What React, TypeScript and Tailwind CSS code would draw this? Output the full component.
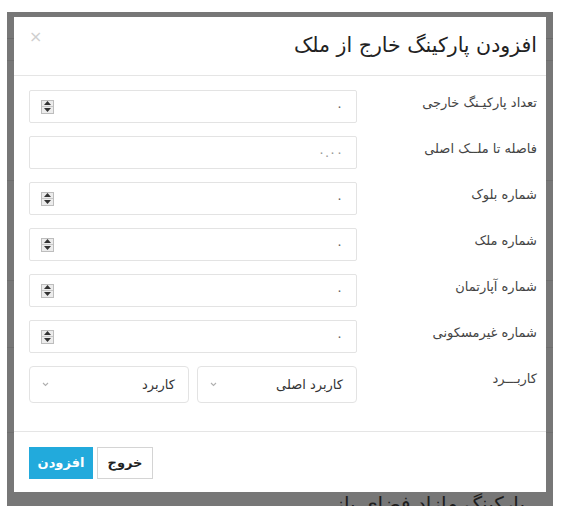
import React from "react";

const font = { fontFamily: '"DejaVu Sans", "Noto Sans", sans-serif' };

function Spinner() {
  return (
    <div className="flex flex-col w-[13px] h-[14px] border border-[#bdbdbd] bg-[#ececec]">
      <div className="flex-1 flex items-center justify-center border-b border-[#c8c8c8]">
        <svg width="7" height="4" viewBox="0 0 7 4"><path d="M0 4 L3.5 0 L7 4 Z" fill="#333" /></svg>
      </div>
      <div className="flex-1 flex items-center justify-center">
        <svg width="7" height="4" viewBox="0 0 7 4"><path d="M0 0 L3.5 4 L7 0 Z" fill="#333" /></svg>
      </div>
    </div>
  );
}

function NumberRow({ label, value, spinner = true, muted = false }: { label: string; value: string; spinner?: boolean; muted?: boolean }) {
  return (
    <div className="flex flex-row-reverse items-start mb-[13px]">
      <div className="w-[180px] text-right text-[13px] text-[#444] pt-[3px]" dir="rtl">{label}</div>
      <div className="w-[328px] h-[33px] border border-[#e3e3e3] rounded-[2px] flex items-center justify-between pl-[11px] pr-[13px] bg-white">
        <div>{spinner ? <Spinner /> : null}</div>
        <div className={"text-[13px] " + (muted ? "text-[#999]" : "text-[#666]")}>{value}</div>
      </div>
    </div>
  );
}

function Chevron() {
  return (
    <svg width="7" height="5" viewBox="0 0 7 5"><path d="M1 1 L3.5 3.5 L6 1" stroke="#b0b0b0" strokeWidth="1.1" fill="none" /></svg>
  );
}

function Select({ text }: { text: string }) {
  return (
    <div className="h-[37px] border border-[#e3e3e3] rounded-[4px] flex items-center justify-between pl-[12px] pr-[13px] bg-white">
      <Chevron />
      <span className="text-[13px] text-[#333]" dir="rtl">{text}</span>
    </div>
  );
}

export default function App() {
  return (
    <div className="w-[562px] h-[521px] bg-white relative overflow-hidden" style={font}>
      {/* backdrop */}
      <div className="absolute left-[7px] top-[12px] w-[546px] h-[494px] bg-[#777777] overflow-hidden">
        <div className="absolute left-0 top-[26px] w-full h-[1px] bg-[#6a6a6a]" />
        <div className="absolute left-0 top-[48px] w-full h-[1px] bg-[#6e6e6e]" />
        <div className="absolute left-0 top-[168px] w-full h-[1px] bg-[#6e6e6e]" />
        <div className="absolute left-0 top-[268px] w-full h-[1px] bg-[#6e6e6e]" />
        <div className="absolute left-0 top-[335px] w-full h-[1px] bg-[#6e6e6e]" />
        <div className="absolute left-0 top-[420px] w-full h-[1px] bg-[#6e6e6e]" />
        <div className="absolute right-[28px] top-[480px] text-[20px] leading-[24px] text-[#1e1e1e] whitespace-nowrap" dir="rtl">پارکینگ مازاد فضای باز</div>
      </div>

      {/* modal */}
      <div className="absolute left-[14px] top-[17px] w-[532px] h-[475px] bg-white flex flex-col">
        <div className="h-[59px] border-b border-[#e5e5e5] flex items-center justify-between pl-[15px] pr-[9px]">
          <span className="text-[16px] text-[#cfcfcf] self-start mt-[12px] leading-none">×</span>
          <span className="text-[20.5px] text-[#222] mt-[-2px]" dir="rtl">افزودن پارکینگ خارج از ملک</span>
        </div>
        <div className="pt-[14px] pl-[15px] pr-[9px] pb-[28px] border-b border-[#e5e5e5]">
          <NumberRow label="تعداد پارکیـنگ خارجی" value="٠" />
          <NumberRow label="فاصله تا ملــک اصلی" value="٠.٠٠" spinner={false} muted />
          <NumberRow label="شماره بلوک" value="٠" />
          <NumberRow label="شماره ملک" value="٠" />
          <NumberRow label="شماره آپارتمان" value="٠" />
          <NumberRow label="شماره غیرمسکونی" value="٠" />
          <div className="flex flex-row-reverse items-start">
            <div className="w-[180px] text-right text-[13px] text-[#444] pt-[3px]" dir="rtl">کاربـــرد</div>
            <div className="w-[328px] grid grid-cols-2 gap-[8px]">
              <Select text="کاربرد" />
              <Select text="کاربرد اصلی" />
            </div>
          </div>
        </div>
        <div className="pt-[15px] pl-[15px] flex gap-[4px]">
          <button className="w-[64px] h-[32px] bg-[#22aadc] text-white text-[13px] font-bold" dir="rtl">افزودن</button>
          <button className="w-[56px] h-[32px] bg-white border border-[#d4d4d4] text-[#222] text-[13px] font-bold" dir="rtl">خروج</button>
        </div>
      </div>
    </div>
  );
}
